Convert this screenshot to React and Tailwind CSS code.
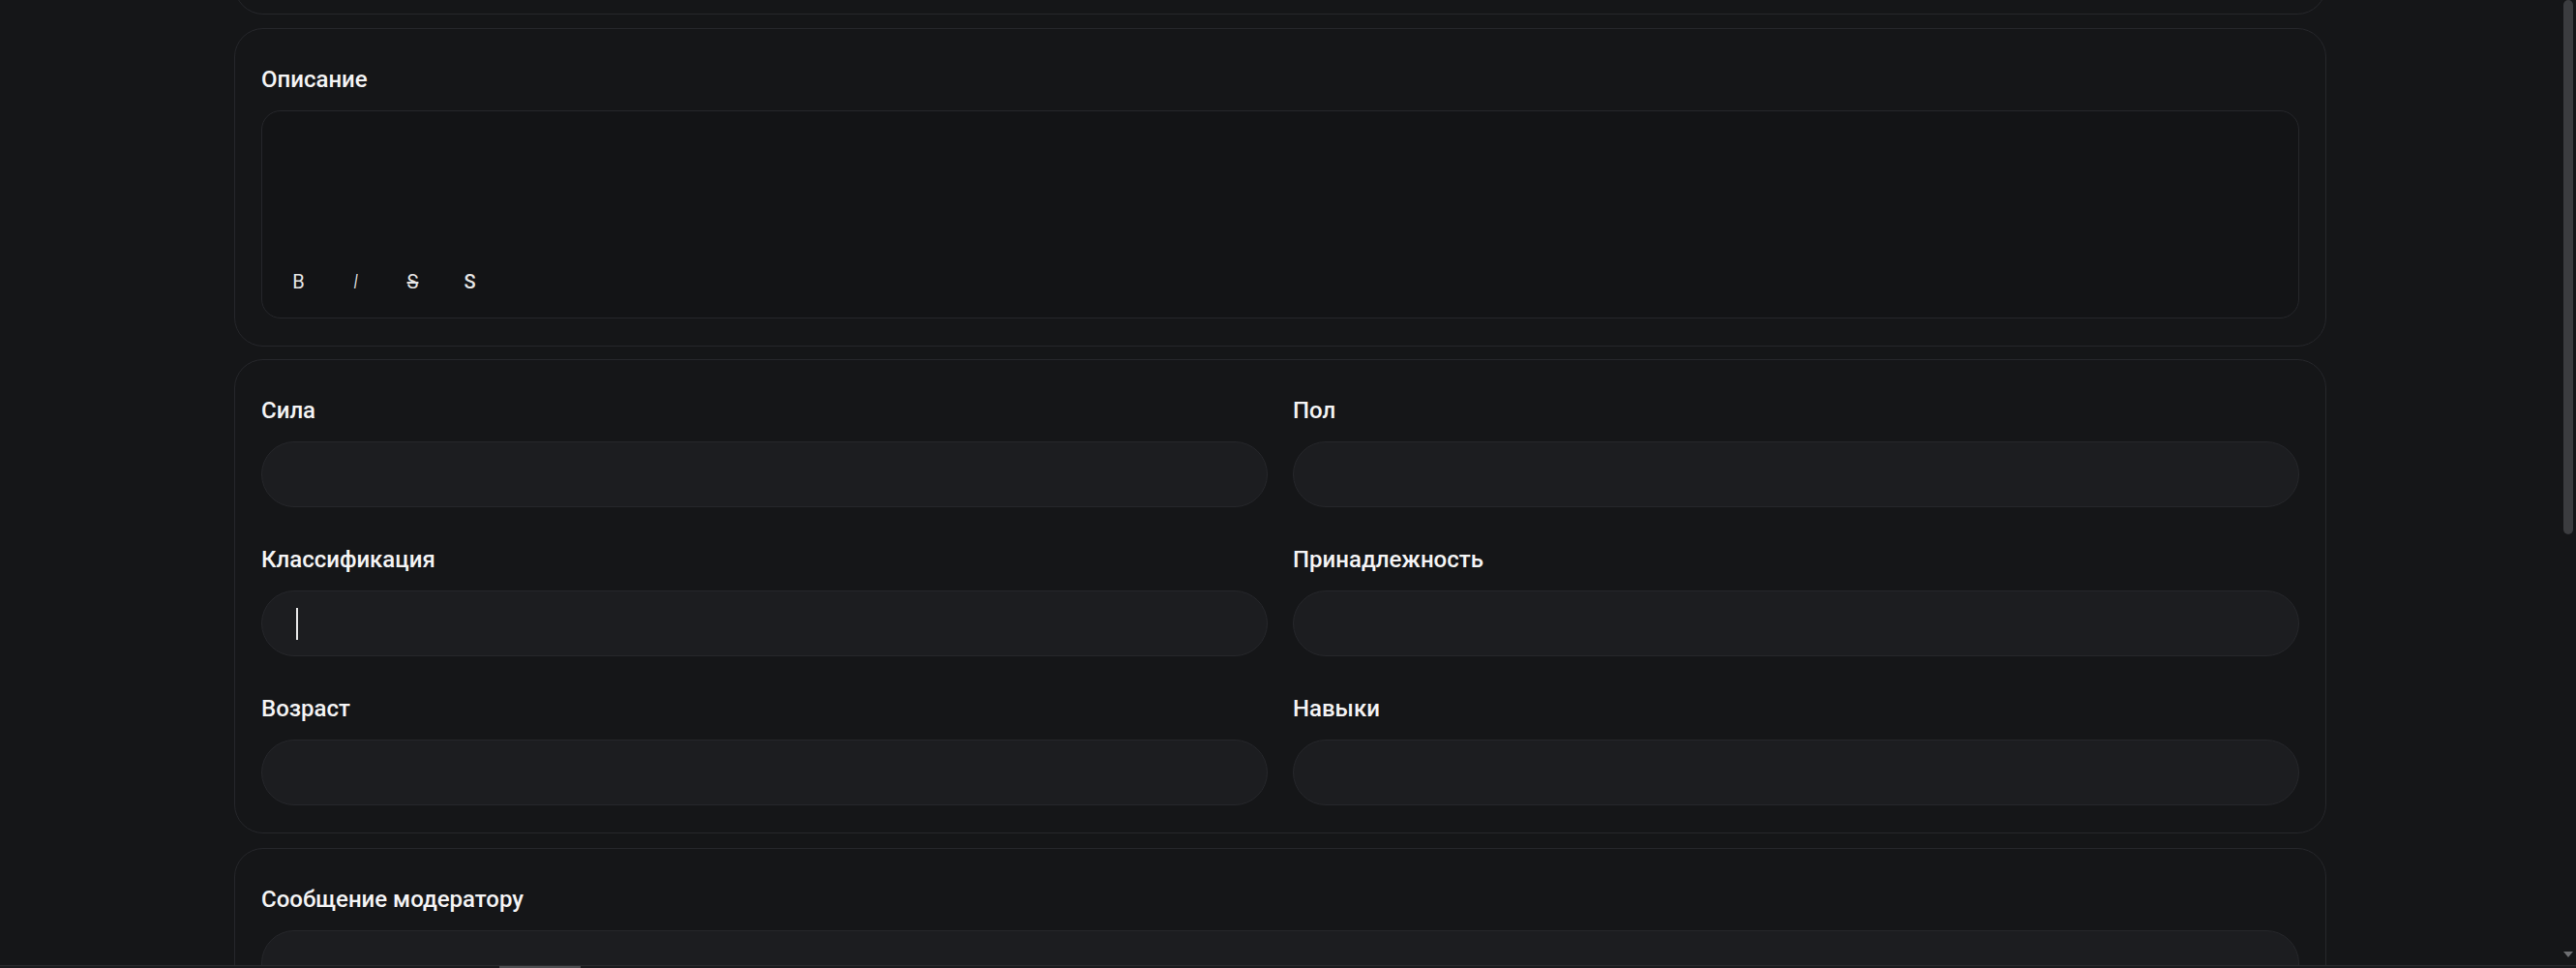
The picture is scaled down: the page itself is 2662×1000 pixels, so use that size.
const fields = [
  { id: "power", label: "Сила" },
  { id: "gender", label: "Пол" },
  { id: "class", label: "Классификация", focused: true },
  { id: "affiliation", label: "Принадлежность" },
  { id: "age", label: "Возраст" },
  { id: "skills", label: "Навыки" }
];

const tools = [
  { key: "bold", label: "B", className: "font-normal" },
  { key: "italic", label: "I", className: "italic font-light" },
  { key: "strike", label: "S", className: "line-through font-normal" },
  { key: "spoiler", label: "S", className: "font-medium" }
];

function Label({ children }) {
  return <div className="text-[24px] leading-[32px] font-medium text-[#f4f4f5]">{children}</div>;
}

function Field({ label, focused }) {
  return (
    <div className="flex flex-col gap-[16px]">
      <Label>{label}</Label>
      <div className="flex h-[68px] items-center rounded-full border border-[#26272b] bg-[#1c1d20] pl-[35px]">
        {focused && <span className="h-[33px] w-[2px] bg-[#e8e8e8]" />}
      </div>
    </div>
  );
}

function Card({ className = "", children }) {
  return (
    <section className={`rounded-[30px] border border-[#26272b] bg-[#151618] px-[27px] pt-[36px] pb-[28px] ${className}`}>
      {children}
    </section>
  );
}

export default function App() {
  return (
    <div className="flex h-[1000px] w-[2662px] flex-col overflow-hidden bg-[#151618] font-['Roboto',sans-serif]">
      <div className="flex min-h-0 flex-1">
        <main className="min-w-0 flex-1 overflow-hidden">
          <div className="mx-auto flex w-[2162px] flex-col">
            {/* previous section, scrolled mostly out of view */}
            <section className="-mt-[185px] h-[200px] rounded-[30px] border border-[#26272b]" />

            <Card className="mt-[14px]">
              <div className="flex flex-col gap-[16px]">
                <Label>Описание</Label>
                <div className="flex h-[215px] flex-col justify-end rounded-[20px] border border-[#26272b] bg-[#131416] pb-[21px] pl-[8px]">
                  <div className="flex">
                    {tools.map((tool) => (
                      <button
                        key={tool.key}
                        type="button"
                        className={`flex h-[32px] w-[59px] items-center justify-center text-[20px] text-[#e6e6e6] ${tool.className}`}
                      >
                        {tool.label}
                      </button>
                    ))}
                  </div>
                </div>
              </div>
            </Card>

            <Card className="mt-[13px]">
              <div className="grid grid-cols-2 gap-x-[26px] gap-y-[38px]">
                {fields.map((field) => (
                  <Field key={field.id} label={field.label} focused={field.focused} />
                ))}
              </div>
            </Card>

            <Card className="mt-[15px]">
              <div className="flex flex-col gap-[16px]">
                <Label>Сообщение модератору</Label>
                <div className="h-[120px] rounded-[34px] border border-[#26272b] bg-[#1c1d20]" />
              </div>
            </Card>
          </div>
        </main>

        <aside className="flex w-[16px] flex-col items-center">
          <div className="h-[552px] w-[10px] rounded-full bg-[#3b3c3f]" />
          <div className="flex-1" />
          <div className="mb-[8px] h-0 w-0 border-x-[5px] border-t-[6px] border-x-transparent border-t-[#6e6f72]" />
        </aside>
      </div>

      <div className="flex h-[3px] border-t border-[#2a2b2e] bg-[#1a1b1e]">
        <div className="ml-[516px] w-[84px] bg-[#4d4e51]" />
      </div>
    </div>
  );
}
